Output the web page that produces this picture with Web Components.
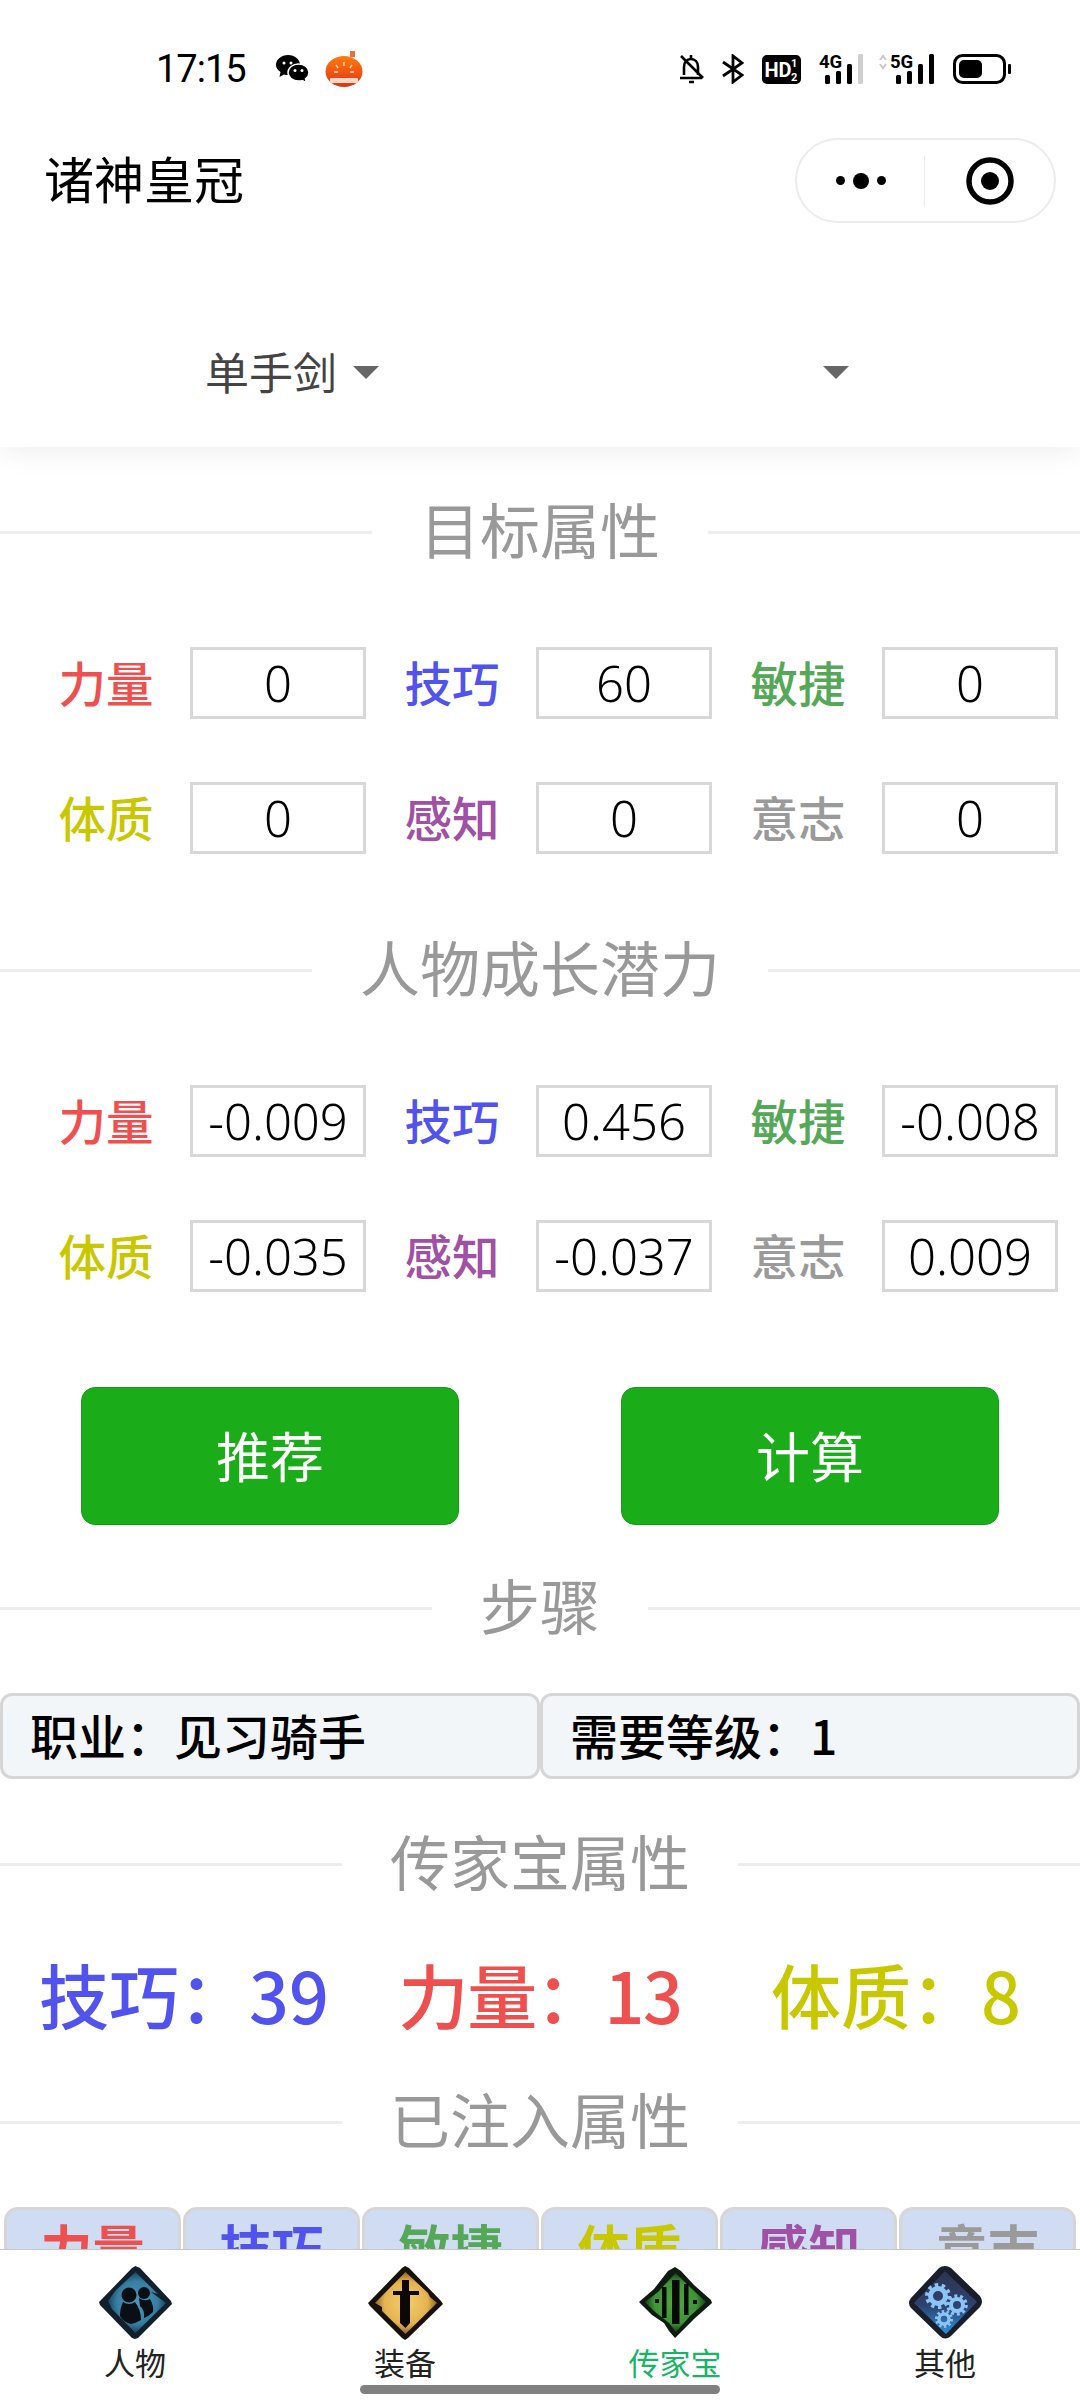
<!DOCTYPE html>
<html lang="zh">
<head>
<meta charset="utf-8">
<title>诸神皇冠</title>
<style>
    html, body {
        margin: 0;
        padding: 0;
        background: #fff;
    }

    body {
        font-family: "Noto Sans CJK SC", "Noto Sans", sans-serif;
    }
</style>
</head>
<body>
<app-page>
    <status-bar></status-bar>
    <nav-header>诸神皇冠</nav-header>
    <main-view>
        <picker-bar></picker-bar>

        <section-title style="margin-top: 43px">目标属性</section-title>
        <stat-grid style="margin-top: 73px" values="0,60,0,0,0,0"></stat-grid>

        <section-title style="margin-top: 74px">人物成长潜力</section-title>
        <stat-grid style="margin-top: 73px" values="-0.009,0.456,-0.008,-0.035,-0.037,0.009"></stat-grid>

        <action-row style="margin-top: 95px">
            <action-button>推荐</action-button>
            <action-button>计算</action-button>
        </action-row>

        <section-title style="margin-top: 41px">步骤</section-title>
        <info-row style="margin-top: 43px">
            <info-cell>职业：见习骑手</info-cell>
            <info-cell>需要等级：1</info-cell>
        </info-row>

        <section-title style="margin-top: 43px">传家宝属性</section-title>
        <legacy-attrs style="margin-top: 46px"></legacy-attrs>

        <section-title style="margin-top: 38px">已注入属性</section-title>
        <inject-table style="margin-top: 43px"></inject-table>
    </main-view>
    <tab-bar>
        <tab-item label="人物">
            <svg viewBox="0 0 75 75" width="75" height="75">
                <defs>
                    <radialGradient id="g1" cx="50%" cy="50%" r="50%">
                        <stop offset="0" stop-color="#4a96bc"/>
                        <stop offset="0.7" stop-color="#387ea2"/>
                        <stop offset="1" stop-color="#1a4560"/>
                    </radialGradient>
                </defs>
                <path d="M37.500 1 L42 3 L73 36 L74 39 L40 73 L37 74 L34 73 L2 40 L1 37 L4 34 L34 3 Z" fill="#12202c"/>
                <path d="M37.500 7 L60 29 L53 27 L68 38 L37.500 68 L14 44 L10 36 L18 25 Z" fill="url(#g1)"/>
                <circle cx="46" cy="28" r="6" fill="#0a0f16"/>
                <path d="M41 33 Q47 37 52 34 Q56 41 55 47 Q51 51 46 53 Q47 45 42 41 Z" fill="#0a0f16"/>
                <circle cx="31" cy="30" r="7.500" fill="#0a0f16"/>
                <path d="M25 37 Q31 41 37 37 Q43 45 43 55 Q38 58 33 59 Q25 57 22 51 Q22 43 25 37 Z" fill="#0a0f16"/>
            </svg>
        </tab-item>
        <tab-item label="装备">
            <svg viewBox="0 0 75 75" width="75" height="75">
                <defs>
                    <radialGradient id="g2" cx="50%" cy="50%" r="50%">
                        <stop offset="0" stop-color="#f3cf6e"/>
                        <stop offset="0.7" stop-color="#e5b350"/>
                        <stop offset="1" stop-color="#8d6425"/>
                    </radialGradient>
                </defs>
                <path d="M37 1 L41 3 L73 36 L75 39 L40 73 L37 75 L34 73 L2 41 L0 38 L3 35 L34 3 Z" fill="#17110b"/>
                <path d="M37.500 7 L60 28 L62 32 L69 38 L37.500 69 L14 46 L14 42 L7 38 Z" fill="url(#g2)"/>
                <path d="M34 15 H41 V26 H51 V30 H42 V58 L37.500 63 L32 58 V30 H25 V26 H34 Z" fill="#0b0805"/>
            </svg>
        </tab-item>
        <tab-item label="传家宝" active>
            <svg viewBox="0 0 75 75" width="75" height="75">
                <defs>
                    <radialGradient id="g3" cx="50%" cy="50%" r="50%">
                        <stop offset="0" stop-color="#4ea83f"/>
                        <stop offset="0.7" stop-color="#3f9436"/>
                        <stop offset="1" stop-color="#163f1a"/>
                    </radialGradient>
                </defs>
                <path d="M37 2 L43 6 L56 20 L73 35 L74 38 L56 54 L44 66 L37 73 L31 66 L26 58 L14 50 L6 42 L1 37 L16 24 L30 6 Z" fill="#0f1a10"/>
                <path d="M37.500 8 L54 24 L68 37 L52 51 L38 67 L31 58 L16 46 L7 37 L20 27 Z" fill="url(#g3)"/>
                <rect x="34" y="15" width="7.500" height="44" fill="#050a05"/>
                <rect x="24" y="22" width="4.500" height="31" fill="#050a05"/>
                <rect x="46" y="19" width="4.500" height="31" fill="#050a05"/>
                <rect x="17" y="34" width="4" height="4" fill="#050a05"/>
                <rect x="55" y="35" width="4" height="4" fill="#050a05"/>
            </svg>
        </tab-item>
        <tab-item label="其他">
            <svg viewBox="0 0 75 75" width="75" height="75">
                <defs>
                    <linearGradient id="g4" x1="0" y1="0" x2="0" y2="1">
                        <stop offset="0" stop-color="#2e3350"/>
                        <stop offset="0.55" stop-color="#2c4370"/>
                        <stop offset="1" stop-color="#2f8fd8"/>
                    </linearGradient>
                </defs>
                <path d="M31 3 Q37 -1 43 3 L72 31 Q76 37 72 42 L43 71 Q37 76 32 71 L3 43 Q-1 38 3 33 Z" fill="#1a1d2a"/>
                <path d="M37 6 L69 37 L38 69 L6 38 Z" fill="url(#g4)"/>
                <g fill="none" stroke="#8cc4f4">
                    <circle cx="30" cy="31" r="11" stroke-width="4" stroke-dasharray="3.400 3.500"/>
                    <circle cx="30" cy="31" r="7.500" stroke-width="5"/>
                    <circle cx="49" cy="40" r="9" stroke-width="3.600" stroke-dasharray="2.900 2.750"/>
                    <circle cx="49" cy="40" r="6" stroke-width="4"/>
                    <circle cx="36" cy="54" r="7.500" stroke-width="3" stroke-dasharray="2.400 2.300"/>
                    <circle cx="36" cy="54" r="5" stroke-width="3.400"/>
                </g>
            </svg>
        </tab-item>
    </tab-bar>
</app-page>

<script>
const STAT_NAMES = [
    ["力量", "#ee4f4f"],
    ["技巧", "#5252ee"],
    ["敏捷", "#55a858"],
    ["体质", "#c8c800"],
    ["感知", "#a050a5"],
    ["意志", "#9a9a9a"],
];

class AppPage extends HTMLElement {
    constructor() {
        super();
        this.shadowDOM = this.attachShadow({ mode: "open" });
    }

    connectedCallback() {
        this.shadowDOM.innerHTML = `
        <style>
            :host {
                display: flex;
                flex-direction: column;
                width: 1080px;
                height: 2400px;
                overflow: hidden;
                position: relative;
                background: #fff;
            }
        </style>
        <slot></slot>`;
    }
}

class StatusBar extends HTMLElement {
    constructor() {
        super();
        this.shadowDOM = this.attachShadow({ mode: "open" });
    }

    connectedCallback() {
        this.shadowDOM.innerHTML = `
        <style>
            :host {
                display: flex;
                align-items: center;
                justify-content: space-between;
                flex: none;
                height: 138px;
                padding: 0 69px 0 156px;
                box-sizing: border-box;
                color: #000;
            }

            .left, .right {
                display: flex;
                align-items: center;
            }

            .time {
                font: 400 38px/1 Roboto, sans-serif;
                width: 92px;
                letter-spacing: -1px;
                margin-right: 28px;
            }

            svg {
                display: block;
            }

            svg text {
                font-family: Roboto, sans-serif;
                font-weight: 700;
            }
        </style>
        <div class="left">
            <span class="time">17:15</span>
            <svg width="33" height="28" viewBox="0 0 33 28" style="margin-right: 16px">
                <path d="M12 0 C19 0 24 4.500 24 10 C24 15.500 19 20 12 20 C10.500 20 9.200 19.800 8 19.400 L3.500 22 L4.500 17 C1.700 15.200 0 12.700 0 10 C0 4.500 5.300 0 12 0 Z"/>
                <path d="M22.500 9 C28.500 9 33 12.800 33 17.500 C33 20 31.700 22.200 29.500 23.800 L30.500 28 L26.500 25.600 C25.500 25.900 24 26 22.500 26 C16.700 26 12 22.200 12 17.500 C12 12.800 16.700 9 22.500 9 Z" stroke="#fff" stroke-width="1.500"/>
                <circle cx="8" cy="8" r="1.500" fill="#fff"/><circle cx="15" cy="8" r="1.500" fill="#fff"/>
                <circle cx="19" cy="15.500" r="1.500" fill="#fff"/><circle cx="26" cy="15.500" r="1.500" fill="#fff"/>
            </svg>
            <svg width="38" height="36" viewBox="0 0 38 36">
                <defs>
                    <linearGradient id="pk" x1="0" y1="0" x2="0" y2="1">
                        <stop offset="0" stop-color="#ff7a10"/>
                        <stop offset="1" stop-color="#de3418"/>
                    </linearGradient>
                </defs>
                <rect x="25" y="0" width="5" height="6" fill="#e8703c"/>
                <ellipse cx="19" cy="20.500" rx="18.500" ry="15.500" fill="url(#pk)"/>
                <path d="M19 11 v4 M11 14 l2 3 M27 14 l-2 3 M9 21 h4 M25 21 h4" stroke="#ffd9a0" stroke-width="1.600"/>
                <rect x="5" y="27" width="28" height="5" rx="1" fill="#f7d8c8"/>
            </svg>
        </div>
        <div class="right">
            <svg width="25" height="30" viewBox="0 0 25 30" fill="none" stroke="#000" stroke-width="2.600" style="margin-right: 18px">
                <path d="M12 1 V4 M5 21 V13 C5 8 8 5 12 5 C16 5 19 8 19 13 V21 M1 24 H23 M2 2 L24 24"/>
                <path d="M10 28 H15" stroke-width="2.500"/>
            </svg>
            <svg width="22" height="30" viewBox="0 0 22 30" fill="none" stroke="#000" stroke-width="2.800" style="margin-right: 18px">
                <path d="M1 8 L20 21 L11 28 V2 L20 9 L1 22"/>
            </svg>
            <svg width="39" height="29" viewBox="0 0 39 29" style="margin-right: 18px">
                <rect width="39" height="29" rx="5"/>
                <text x="2.500" y="22" font-size="20" fill="#fff">HD</text>
                <text x="29" y="12" font-size="11" fill="#fff">1</text>
                <text x="29" y="26" font-size="11" fill="#fff">2</text>
            </svg>
            <svg width="44" height="38" viewBox="0 -8 44 38" style="margin: -8px 16px 0 0">
                <text x="0" y="14" font-size="18.500">4G</text>
                <rect x="6" y="21" width="5" height="9" rx="1.500"/>
                <rect x="17" y="17" width="5" height="13" rx="1.500"/>
                <rect x="28" y="10" width="5" height="20" rx="1.500"/>
                <rect x="39" y="0" width="5" height="30" rx="1.500" fill="#cfcfcf"/>
            </svg>
            <svg width="56" height="38" viewBox="0 -8 56 38" style="margin: -8px 18px 0 0">
                <path d="M1 6 L4 2 L7 6 M1 10 L4 14 L7 10" fill="none" stroke="#c8c8c8" stroke-width="2"/>
                <text x="11" y="14" font-size="18.500">5G</text>
                <rect x="17" y="21" width="5" height="9" rx="1.500"/>
                <rect x="28" y="17" width="5" height="13" rx="1.500"/>
                <rect x="39" y="10" width="5" height="20" rx="1.500"/>
                <rect x="50" y="0" width="5" height="30" rx="1.500"/>
            </svg>
            <svg width="58" height="30" viewBox="0 0 58 30">
                <rect x="1.500" y="1.500" width="50" height="27" rx="8" fill="none" stroke="#000" stroke-width="3"/>
                <rect x="6" y="6" width="23" height="18" rx="5"/>
                <rect x="55" y="10" width="3" height="10" rx="1"/>
            </svg>
        </div>`;
    }
}

class NavHeader extends HTMLElement {
    constructor() {
        super();
        this.shadowDOM = this.attachShadow({ mode: "open" });
    }

    connectedCallback() {
        this.shadowDOM.innerHTML = `
        <style>
            :host {
                display: flex;
                align-items: center;
                justify-content: space-between;
                flex: none;
                height: 85px;
                padding: 0 24px 0 44px;
                margin-bottom: 75px;
                color: #000;
                font-size: 50px;
            }

            .title {
                padding-bottom: 8px;
            }

            .capsule {
                display: flex;
                align-items: center;
                width: 261px;
                height: 85px;
                box-sizing: border-box;
                border: 2px solid #ececec;
                border-radius: 43px;
            }

            .more {
                display: flex;
                align-items: center;
                justify-content: center;
                gap: 8px;
                width: 127px;
            }

            .more i {
                display: block;
                width: 9px;
                height: 9px;
                border-radius: 50%;
                background: #000;
            }

            .more i:nth-child(2) {
                width: 16px;
                height: 16px;
            }

            .sep {
                width: 1px;
                height: 50px;
                background: #ececec;
            }

            .target {
                flex: 1;
                display: flex;
                justify-content: center;
            }
        </style>
        <div class="title"><slot></slot></div>
        <div class="capsule">
            <div class="more"><i></i><i></i><i></i></div>
            <div class="sep"></div>
            <div class="target">
                <svg width="48" height="48" viewBox="0 0 48 48">
                    <circle cx="24" cy="24" r="21" fill="none" stroke="#000" stroke-width="5.500"/>
                    <circle cx="24" cy="24" r="9" fill="#000"/>
                </svg>
            </div>
        </div>`;
    }
}

class MainView extends HTMLElement {
    constructor() {
        super();
        this.shadowDOM = this.attachShadow({ mode: "open" });
    }

    connectedCallback() {
        this.shadowDOM.innerHTML = `
        <style>
            :host {
                display: block;
                flex: 1;
                min-height: 0;
                overflow: hidden;
            }
        </style>
        <slot></slot>`;
    }
}

class PickerBar extends HTMLElement {
    constructor() {
        super();
        this.shadowDOM = this.attachShadow({ mode: "open" });
    }

    connectedCallback() {
        this.shadowDOM.innerHTML = `
        <style>
            :host {
                display: flex;
                height: 149px;
                background: #fff;
                box-shadow: 0 0 32px rgba(0, 0, 0, 0.09);
                color: #444;
                font-size: 44px;
            }

            .cell {
                flex: 1;
                display: flex;
                align-items: center;
                justify-content: center;
                padding-left: 40px;
                box-sizing: border-box;
            }

            .cell span {
                padding-bottom: 3px;
            }

            .cell + .cell {
                padding-left: 32px;
            }

            .arrow {
                width: 0;
                height: 0;
                margin-left: 16px;
                border-left: 13px solid transparent;
                border-right: 13px solid transparent;
                border-top: 13px solid #666;
            }
        </style>
        <div class="cell"><span>单手剑</span><div class="arrow"></div></div>
        <div class="cell"><div class="arrow"></div></div>`;
    }
}

class SectionTitle extends HTMLElement {
    constructor() {
        super();
        this.shadowDOM = this.attachShadow({ mode: "open" });
    }

    connectedCallback() {
        this.shadowDOM.innerHTML = `
        <style>
            :host {
                display: flex;
                align-items: center;
                height: 84px;
                color: #999;
                font-size: 60px;
            }

            .line {
                flex: 1;
                height: 3px;
                background: #ededed;
            }

            .text {
                margin: 0 48px;
                line-height: 84px;
                height: 84px;
                position: relative;
                top: -4px;
            }
        </style>
        <div class="line"></div>
        <div class="text"><slot></slot></div>
        <div class="line"></div>`;
    }
}

class StatGrid extends HTMLElement {
    constructor() {
        super();
        this.shadowDOM = this.attachShadow({ mode: "open" });
    }

    connectedCallback() {
        const values = this.getAttribute("values").split(",");
        const cells = STAT_NAMES.map(([name, color], i) => `
            <div class="cell">
                <span class="name" style="color: ${color}">${name}</span>
                <span class="value">${values[i]}</span>
            </div>`).join("");

        this.shadowDOM.innerHTML = `
        <style>
            :host {
                display: grid;
                grid-template-columns: repeat(3, 346px);
                row-gap: 63px;
                padding: 0 20px;
            }

            .cell {
                display: flex;
                align-items: center;
                height: 72px;
            }

            .name {
                flex: 1;
                text-align: center;
                font-size: 47.500px;
                font-weight: 500;
                padding: 0 0 4px 2px;
            }

            .value {
                width: 176px;
                height: 72px;
                box-sizing: border-box;
                border: 3px solid #d8d8d8;
                text-align: center;
                font: 300 49px/66px "Noto Sans", sans-serif;
                color: #000;
            }
        </style>
        ${cells}`;
    }
}

class ActionRow extends HTMLElement {
    constructor() {
        super();
        this.shadowDOM = this.attachShadow({ mode: "open" });
    }

    connectedCallback() {
        this.shadowDOM.innerHTML = `
        <style>
            :host {
                display: flex;
                gap: 162px;
                padding: 0 81px;
            }
        </style>
        <slot></slot>`;
    }
}

class ActionButton extends HTMLElement {
    constructor() {
        super();
        this.shadowDOM = this.attachShadow({ mode: "open" });
    }

    connectedCallback() {
        this.shadowDOM.innerHTML = `
        <style>
            :host {
                display: flex;
                align-items: center;
                justify-content: center;
                width: 378px;
                height: 138px;
                box-sizing: border-box;
                padding-bottom: 4px;
                background: #1aad19;
                border: 1px solid #179b16;
                border-radius: 14px;
                color: #fff;
                font-size: 54px;
            }
        </style>
        <slot></slot>`;
    }
}

class InfoRow extends HTMLElement {
    constructor() {
        super();
        this.shadowDOM = this.attachShadow({ mode: "open" });
    }

    connectedCallback() {
        this.shadowDOM.innerHTML = `
        <style>
            :host {
                display: flex;
            }
        </style>
        <slot></slot>`;
    }
}

class InfoCell extends HTMLElement {
    constructor() {
        super();
        this.shadowDOM = this.attachShadow({ mode: "open" });
    }

    connectedCallback() {
        this.shadowDOM.innerHTML = `
        <style>
            :host {
                display: flex;
                align-items: center;
                flex: 1;
                height: 86px;
                box-sizing: border-box;
                padding: 0 0 4px 27px;
                background: #f3f6f9;
                border: 3px solid #d6d6d6;
                border-radius: 12px;
                color: #000;
                font-size: 48px;
                font-weight: 500;
            }
        </style>
        <slot></slot>`;
    }
}

class LegacyAttrs extends HTMLElement {
    constructor() {
        super();
        this.shadowDOM = this.attachShadow({ mode: "open" });
    }

    connectedCallback() {
        this.shadowDOM.innerHTML = `
        <style>
            :host {
                display: grid;
                grid-template-columns: repeat(3, 1fr);
                padding: 0 6px 6px;
                height: 84px;
                align-items: center;
                text-align: center;
                font-size: 70px;
                font-weight: 500;
                line-height: 84px;
            }
        </style>
        <span style="color: #5252ee">技巧：39</span>
        <span style="color: #ee4f4f; letter-spacing: -1.400px">力量：13</span>
        <span style="color: #c8c800">体质：8</span>`;
    }
}

class InjectTable extends HTMLElement {
    constructor() {
        super();
        this.shadowDOM = this.attachShadow({ mode: "open" });
    }

    connectedCallback() {
        const cells = STAT_NAMES.map(([name, color]) =>
            `<div class="head" style="color: ${color}">${name}</div>`).join("");

        this.shadowDOM.innerHTML = `
        <style>
            :host {
                display: grid;
                grid-template-columns: repeat(6, 177px);
                gap: 2px;
                padding: 0 4px;
            }

            .head {
                height: 90px;
                box-sizing: border-box;
                padding-top: 2px;
                background: #d0dcf2;
                border: 3px solid #d6d6d6;
                border-radius: 14px;
                text-align: center;
                font-size: 52px;
                font-weight: 700;
                line-height: 70px;
            }
        </style>
        ${cells}`;
    }
}

class TabBar extends HTMLElement {
    constructor() {
        super();
        this.shadowDOM = this.attachShadow({ mode: "open" });
    }

    connectedCallback() {
        this.shadowDOM.innerHTML = `
        <style>
            :host {
                display: grid;
                grid-template-columns: repeat(4, 1fr);
                flex: none;
                position: relative;
                height: 151px;
                box-sizing: border-box;
                padding-top: 15px;
                background: #fff;
                border-top: 1px solid #c8c8c8;
            }

            .home {
                position: absolute;
                left: 360px;
                bottom: 6px;
                width: 360px;
                height: 9px;
                border-radius: 5px;
                background: #808080;
            }
        </style>
        <slot></slot>
        <div class="home"></div>`;
    }
}

class TabItem extends HTMLElement {
    constructor() {
        super();
        this.shadowDOM = this.attachShadow({ mode: "open" });
    }

    connectedCallback() {
        const color = this.hasAttribute("active") ? "#19b466" : "#222";
        this.shadowDOM.innerHTML = `
        <style>
            :host {
                display: flex;
                flex-direction: column;
                align-items: center;
            }

            .label {
                color: ${color};
                font-size: 31px;
                line-height: 40px;
                margin-top: 2px;
            }
        </style>
        <slot></slot>
        <div class="label">${this.getAttribute("label")}</div>`;
    }
}

customElements.define("app-page", AppPage);
customElements.define("status-bar", StatusBar);
customElements.define("nav-header", NavHeader);
customElements.define("main-view", MainView);
customElements.define("picker-bar", PickerBar);
customElements.define("section-title", SectionTitle);
customElements.define("stat-grid", StatGrid);
customElements.define("action-row", ActionRow);
customElements.define("action-button", ActionButton);
customElements.define("info-row", InfoRow);
customElements.define("info-cell", InfoCell);
customElements.define("legacy-attrs", LegacyAttrs);
customElements.define("inject-table", InjectTable);
customElements.define("tab-bar", TabBar);
customElements.define("tab-item", TabItem);
</script>
</body>
</html>
